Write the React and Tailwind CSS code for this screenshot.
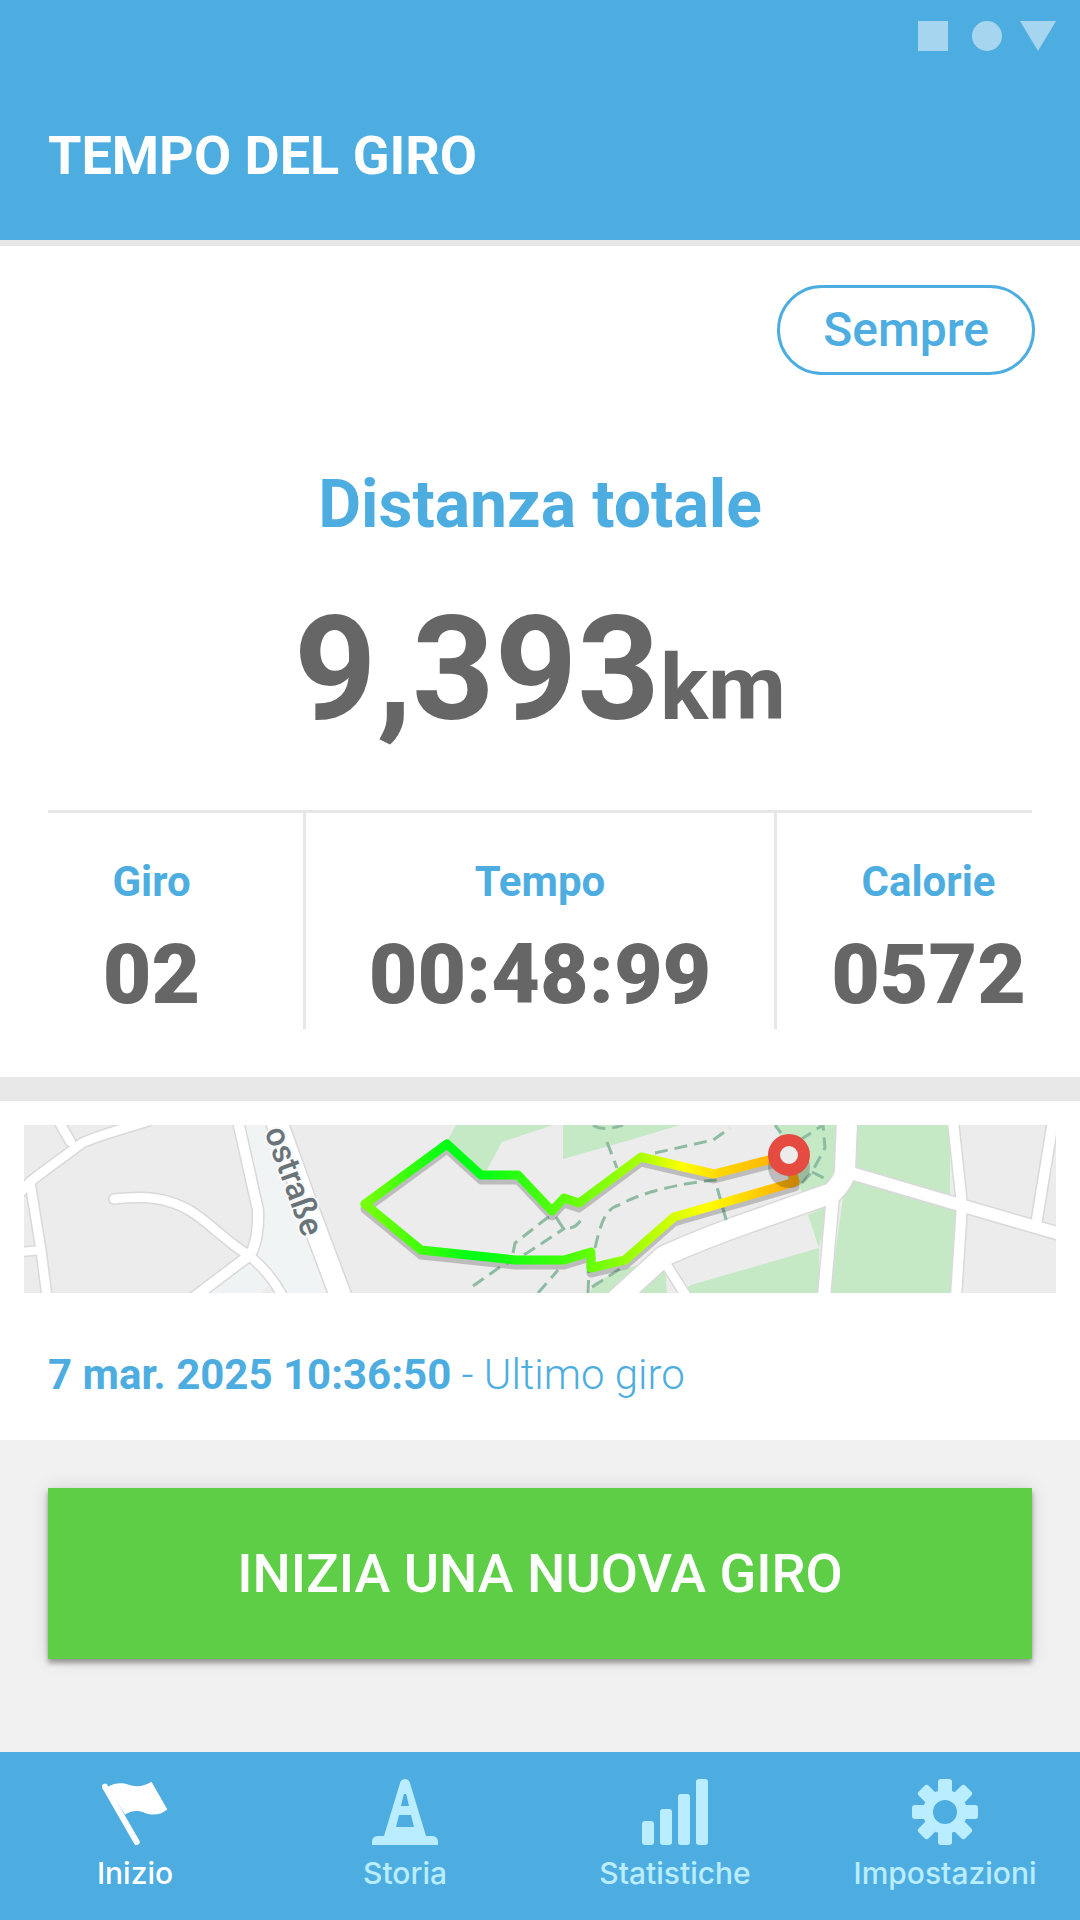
import React from 'react';

const stats = [
    { label: 'Giro', value: '02' },
    { label: 'Tempo', value: '00:48:99' },
    { label: 'Calorie', value: '0572' },
];

const FlagIcon = () => (
    <svg viewBox="0 0 66 66" className="w-[66px] h-[66px]" fill="currentColor" aria-hidden="true">
        <path d="M3 7.7L34.7 63" stroke="currentColor" strokeWidth="6" strokeLinecap="round" />
        <path d="M5.500 8C14 3 21 4 26 5.500C34 8.500 42 7.500 49.500 2.700L65.300 30.500C58 36.500 50 36.500 43 34C36 31 30 31.500 23 35.500Z" />
    </svg>
);

const ConeIcon = () => (
    <svg viewBox="0 0 66 66" className="w-[66px] h-[66px]" fill="currentColor" aria-hidden="true">
        <path
            fillRule="evenodd"
            d="M28.200 3.600A5 5 0 0 1 37.800 3.600L54 57H60.500A5.500 5.500 0 0 1 66 62.500V66H0V62.500A5.500 5.500 0 0 1 5.500 57H12ZM31.800 15L29 27H37L34.200 15ZM27 36L24 48H42L39 36Z"
        />
    </svg>
);

const BarsIcon = () => (
    <svg viewBox="0 0 66 66" className="w-[66px] h-[66px]" fill="currentColor" aria-hidden="true">
        <rect x="0" y="42" width="12" height="24" rx="3" />
        <rect x="18" y="30" width="12" height="36" rx="3" />
        <rect x="36" y="15" width="12" height="51" rx="3" />
        <rect x="54" y="0" width="12" height="66" rx="3" />
    </svg>
);

const GearIcon = () => (
    <svg viewBox="0 0 66 66" className="w-[66px] h-[66px]" fill="currentColor" aria-hidden="true">
        {[0, 45, 90, 135, 180, 225, 270, 315].map((angle) => (
            <rect key={angle} x="26" y="0" width="14" height="18" rx="3" transform={`rotate(${angle} 33 33)`} />
        ))}
        <circle cx="33" cy="33" r="17" fill="none" stroke="currentColor" strokeWidth="10" />
    </svg>
);

const tabs = [
    { name: 'Inizio', icon: FlagIcon, active: true },
    { name: 'Storia', icon: ConeIcon },
    { name: 'Statistiche', icon: BarsIcon },
    { name: 'Impostazioni', icon: GearIcon },
];

const roads = [
    { d: 'M34 -5L46.600 17', w: 9 },
    { d: 'M124 -4C100 4 78 9 58 18C40 32 22 44 6 57', w: 9 },
    { d: 'M-4 68L6 57L17 125L23 172', w: 9 },
    { d: 'M-4 127L17 125', w: 8 },
    { d: 'M90 74C125 70 145 74 165 85C185 97 200 115 224 130C240 142 250 155 259 172', w: 9 },
    { d: 'M214 -4L234 85Q235 115 226 130L169 173', w: 10 },
    { d: 'M252 -5L287 92L317 172', w: 21 },
    { d: 'M593 174L640 131Q680 113 723 98L808 68Q821 55 821 45L823 -4', w: 20 },
    { d: 'M809 70L800 172', w: 12 },
    { d: 'M820 46L936 80L1036 109', w: 12 },
    { d: 'M929 -4L938 80L932 172', w: 10 },
    { d: 'M1029 -4L1012 100', w: 10 },
    { d: 'M640 136L664 174', w: 9 },
];

const parks = [
    'M432 0L421 20L457 50L463 45L478 17L529 0Z',
    'M539 0V34L606 15L656 0Z',
    'M751 0L770 45L778 68L812 56L818 0Z',
    'M828 0V52L926 80V0Z',
    'M822 50L806 168H930L931 80Z',
    'M655 168L667 160L795 123V168Z',
    'M784 90L805 80L795 123Z',
    'M566 168L570 158L598 145L625 136L596 168Z',
    'M613 168L641 143L643 168Z',
];

const trails = [
    'M449 161L476 142L503 128L541 103',
    'M489 128L491 118L523 93L532 92L539 103Q553 105 558 92',
    'M571 123C576 102 580 84 595 80C620 66 660 58 691 55L703 98',
    'M631 28L689 15L706 3',
    'M583 17L593 43',
    'M569 0Q579 7 599 0',
    'M514 168L534 145',
    'M564 168L565 145',
    'M568 162L599 142',
    'M776 15L799 0L801 23L788 47L778 58',
    'M788 47L804 55',
    'M751 0L757 8',
];

const upperRoute = 'M341 79L423 19L457 50H494L528 86L540 73L555 78L617 32L690 49L764 30';
const lowerRoute = 'M341 79L397 125L492 135H540L567 127V143L601 135L650 92L771 57L764 30';

const RouteMap = () => (
    <svg viewBox="0 0 1032 168" className="block w-full h-auto" role="img" aria-label="Mappa dell'ultimo giro">
        <defs>
            <linearGradient id="upper" gradientUnits="userSpaceOnUse" x1="341" y1="0" x2="771" y2="0">
                <stop offset="0" stopColor="#78ff0a" />
                <stop offset="0.19" stopColor="#00ff15" />
                <stop offset="0.27" stopColor="#00ff15" />
                <stop offset="0.44" stopColor="#55ff0d" />
                <stop offset="0.64" stopColor="#a8ff05" />
                <stop offset="0.74" stopColor="#ffff00" />
                <stop offset="0.82" stopColor="#ffd800" />
                <stop offset="1" stopColor="#ffa800" />
            </linearGradient>
            <linearGradient id="lower" gradientUnits="userSpaceOnUse" x1="341" y1="0" x2="771" y2="0">
                <stop offset="0" stopColor="#78ff0a" />
                <stop offset="0.13" stopColor="#40ff0a" />
                <stop offset="0.25" stopColor="#00ff15" />
                <stop offset="0.46" stopColor="#40ff0a" />
                <stop offset="0.6" stopColor="#90ff05" />
                <stop offset="0.79" stopColor="#ffff00" />
                <stop offset="1" stopColor="#ffa800" />
            </linearGradient>
        </defs>
        <rect width="1032" height="168" fill="#ececec" />
        <path d="M218 0L234 85L226 130L256 168H317L262 0Z" fill="#f1f4f5" />
        <path d="M184 168L226 137L246 158L238 168Z" fill="#f0f3f3" />
        <g fill="#c4e9c4">
            {parks.map((d) => (
                <path key={d} d={d} />
            ))}
        </g>
        <g fill="none" stroke="#d9d9db" strokeLinecap="round" strokeLinejoin="round">
            {roads.map((road) => (
                <path key={road.d} d={road.d} strokeWidth={road.w + 3} />
            ))}
        </g>
        <g fill="none" stroke="#ffffff" strokeLinecap="round" strokeLinejoin="round">
            {roads.map((road) => (
                <path key={road.d} d={road.d} strokeWidth={road.w} />
            ))}
        </g>
        <g fill="none" stroke="#8ebba1" strokeWidth="3" strokeDasharray="13 7">
            {trails.map((d) => (
                <path key={d} d={d} />
            ))}
        </g>
        <text
            transform="translate(279 113) rotate(70)"
            textAnchor="end"
            fontSize="33"
            fill="#6a7377"
            stroke="#f7f9fa"
            strokeWidth="4"
            paintOrder="stroke"
            className="font-medium"
        >
            ostraße
        </text>
        {/* route shadow, then the route */}
        <g fill="none" strokeWidth="9" strokeLinecap="round" strokeLinejoin="round">
            <path d={upperRoute + lowerRoute} transform="translate(0 5)" stroke="#000000" strokeOpacity="0.2" />
            <path d={lowerRoute} stroke="url(#lower)" />
            <path d={upperRoute} stroke="url(#upper)" />
        </g>
        <circle cx="765" cy="42" r="21" fill="#000000" fillOpacity="0.2" />
        <circle cx="765" cy="30" r="15" fill="#ececec" stroke="#e64b42" strokeWidth="12" />
    </svg>
);

const App = () => {
    return (
        <div className="flex min-h-screen flex-col bg-white font-['Roboto',sans-serif]">
            <header className="flex flex-col border-b-6 border-[#e7e7e7] bg-[#4eade0] pt-[21px] pb-[54px]">
                <svg viewBox="0 0 138 30" className="mr-6 h-[30px] w-[138px] self-end" fill="#a6d6ef" aria-hidden="true">
                    <rect width="30" height="30" />
                    <circle cx="69" cy="15" r="15" />
                    <path d="M102 0H138L120 30Z" />
                </svg>
                <h1 className="mt-[75px] px-12 text-[54px] leading-[60px] font-bold text-white">TEMPO DEL GIRO</h1>
            </header>

            <main className="flex flex-1 flex-col">
                <section className="flex flex-col pt-[39px] pb-12">
                    <button className="mr-[45px] h-[90px] self-end rounded-full border-3 border-[#4eade0] px-[43px] text-[48px] leading-[60px] font-medium text-[#4eade0]">
                        Sempre
                    </button>
                    <h2 className="mt-[94px] text-center text-[66px] leading-[72px] font-bold text-[#4eade0]">Distanza totale</h2>
                    <p className="mt-[57px] text-center text-[144px] leading-[144px] font-bold text-[#666666]">
                        9,393<span className="text-[90px] leading-[90px]">km</span>
                    </p>
                    <hr className="mx-12 mt-[68px] border-t-3 border-[#e7e7e7]" />
                    <dl className="grid grid-cols-[102fr_157fr_101fr] divide-x-3 divide-[#e7e7e7] text-center">
                        {stats.map((stat) => (
                            <div key={stat.label} className="pt-[45px] pb-1.5">
                                <dt className="text-[42px] leading-[48px] font-bold text-[#4eade0]">{stat.label}</dt>
                                <dd className="mt-[21px] text-[84px] leading-[96px] font-black text-[#666666]">{stat.value}</dd>
                            </div>
                        ))}
                    </dl>
                </section>

                <section className="border-t-24 border-[#e7e7e7] px-6 pt-6 pb-[41px]">
                    <RouteMap />
                    <p className="mt-[58px] px-6 text-[42px] leading-[48px] font-light text-[#4eade0]">
                        <time className="font-bold">7 mar. 2025 10:36:50</time> - Ultimo giro
                    </p>
                </section>

                <section className="flex-1 bg-[#f1f1f1] px-12 pt-12 pb-[93px]">
                    <button className="h-[171px] w-full bg-[#5ece47] text-[54px] leading-[60px] font-medium text-white shadow-[0_4px_5px_rgba(0,0,0,0.35),0_0_18px_rgba(0,0,0,0.12)]">
                        INIZIA UNA NUOVA GIRO
                    </button>
                </section>
            </main>

            <nav className="grid h-[168px] grid-cols-4 bg-[#4eade0] font-['Inter',sans-serif]">
                {tabs.map((tab) => (
                    <a
                        key={tab.name}
                        href="#"
                        className={`flex flex-col items-center pt-[27px] text-[30px] leading-9 font-medium ${tab.active ? 'text-white' : 'text-[#b9edff]'}`}
                    >
                        <tab.icon />
                        <span className="mt-[10px]">{tab.name}</span>
                    </a>
                ))}
            </nav>
        </div>
    );
};

export default App;
